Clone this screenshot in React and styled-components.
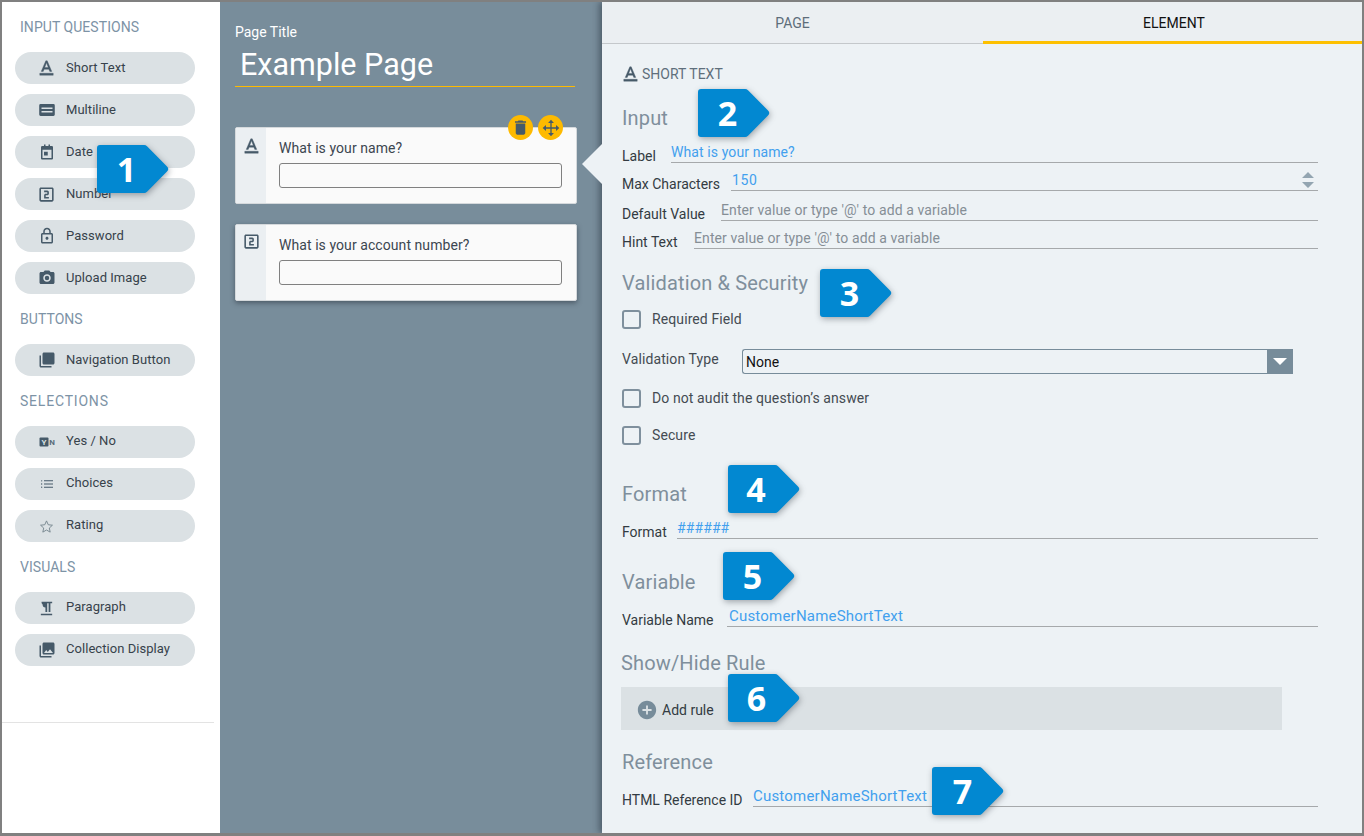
import styled, { createGlobalStyle } from 'styled-components';

const GlobalStyle = createGlobalStyle`
  html, body {
    margin: 0;
    padding: 0;
    background: #fff;
  }
  * {
    box-sizing: border-box;
  }
`;

const ICON_PATHS = {
  shortText: 'M5 17v2h14v-2H5zm4.5-4.2h5l.9 2.2h2.1L12.75 4h-1.5L6.5 15h2.1l.9-2.2zM12 5.98L13.87 11h-3.74L12 5.98z',
  multiline: 'M5 5.500h14a1.500 1.500 0 0 1 1.500 1.500v10a1.500 1.500 0 0 1-1.500 1.500H5A1.500 1.500 0 0 1 3.500 17V7A1.500 1.500 0 0 1 5 5.500zm1 3.700v1.700h12V9.200H6zm0 3.900v1.700h12v-1.700H6z',
  date: 'M8 2h2v2h4V2h2v2h2.500A1.500 1.500 0 0 1 20 5.500v15a1.500 1.500 0 0 1-1.500 1.500h-13A1.500 1.500 0 0 1 4 20.500v-15A1.500 1.500 0 0 1 5.500 4H8V2zM6 9v11h12V9H6zm2 2.500h5v5H8v-5z',
  number: 'M19 3H5c-1.100 0-2 .9-2 2v14c0 1.100.9 2 2 2h14c1.100 0 2-.9 2-2V5c0-1.100-.9-2-2-2zm0 16H5V5h14v14zm-4-4h-4v-2h2c1.100 0 2-.9 2-2V9c0-1.100-.9-2-2-2H9v2h4v2h-2c-1.100 0-2 .9-2 2v4h6v-2z',
  lock: 'M18 8h-1V6c0-2.760-2.240-5-5-5S7 3.240 7 6v2H6c-1.100 0-2 .9-2 2v10c0 1.100.9 2 2 2h12c1.100 0 2-.9 2-2V10c0-1.100-.9-2-2-2zM9 6c0-1.660 1.340-3 3-3s3 1.340 3 3v2H9V6zm9 14H6V10h12v10zm-6-3c1.100 0 2-.9 2-2s-.9-2-2-2-2 .9-2 2 .9 2 2 2z',
  camera: 'M9 2L7.170 4H4c-1.100 0-2 .9-2 2v12c0 1.100.9 2 2 2h16c1.100 0 2-.9 2-2V6c0-1.100-.9-2-2-2h-3.170L15 2H9zm3 15c-2.760 0-5-2.240-5-5s2.240-5 5-5 5 2.240 5 5-2.240 5-5 5zm0-2a3 3 0 1 0 0-6 3 3 0 0 0 0 6z',
  nav: 'M4 6H2v14c0 1.100.9 2 2 2h14v-2H4V6zm16-4H8c-1.100 0-2 .9-2 2v12c0 1.100.9 2 2 2h12c1.100 0 2-.9 2-2V4c0-1.100-.9-2-2-2z',
  list: 'M4 6.200a1 1 0 1 0 0 2 1 1 0 0 0 0-2zm0 4.800a1 1 0 1 0 0 2 1 1 0 0 0 0-2zm0 4.800a1 1 0 1 0 0 2 1 1 0 0 0 0-2zM7.500 6.400h13.500v1.500H7.500V6.400zm0 4.800h13.500v1.500H7.500v-1.500zm0 4.800h13.500v1.500H7.500V16z',
  paragraph: 'M5 2.500h15v2h-2.500V17h-2.500V4.500h-2V17h-2.500v-6.500A4 4 0 0 1 6.500 6.500 4 4 0 0 1 5 2.500zM4 19.500h16v2H4v-2z',
  collection: 'M22 16V4c0-1.100-.9-2-2-2H8c-1.100 0-2 .9-2 2v12c0 1.100.9 2 2 2h12c1.100 0 2-.9 2-2zm-11-4l2.030 2.710L16 11l4 5H8l3-4zM2 6v14c0 1.100.9 2 2 2h14v-2H4V6H2z',
  trash: 'M6 19c0 1.100.9 2 2 2h8c1.100 0 2-.9 2-2V7H6v12zM19 4h-3.500l-1-1h-5l-1 1H5v2h14V4z',
  add: 'M12 2C6.480 2 2 6.480 2 12s4.480 10 10 10 10-4.480 10-10S17.520 2 12 2zm5 11h-4v4h-2v-4H7v-2h4V7h2v4h4v2z',
  move: 'M12 2l3.500 4h-2.700v5.200H18V8.500l4 3.500-4 3.500v-2.700h-5.200V18h2.700L12 22l-3.500-4h2.700v-5.200H6v2.700L2 12l4-3.500v2.700h5.200V6H8.500L12 2z',
};

const Frame = styled.div`
  position: relative;
  display: flex;
  width: 1364px;
  height: 836px;
  overflow: hidden;
  border: solid #808080;
  border-width: 2px 2px 3px 2px;
  font-family: Roboto, "Liberation Sans", sans-serif;
`;

const Toolbox = styled.aside`
  flex: 0 0 218px;
  background: #fff;
  padding-left: 13px;
`;

const ToolHeading = styled.h3`
  margin: 0 0 0 5px;
  height: 50px;
  line-height: 50px;
  font-size: 14px;
  font-weight: 400;
  letter-spacing: ${(p) => p.$spacing || 0.05}px;
  color: #7d93a6;
`;

const ToolList = styled.div`
  display: flex;
  flex-direction: column;
  gap: 10px;
`;

const ToolPill = styled.div`
  display: flex;
  align-items: center;
  width: 180px;
  height: 32px;
  padding-left: 20px;
  padding-bottom: 1px;
  border-radius: 16px;
  background: #dbe1e4;
  font-size: 13px;
  letter-spacing: 0.05px;
  color: #37424b;
`;

const ToolIcon = styled.span`
  display: flex;
  flex: 0 0 23px;
  justify-content: center;
  align-items: center;
  margin-right: 8px;
  margin-top: 1px;
`;

const ToolText = styled.span`
  margin-top: ${(p) => (p.$lift ? -2 : 0)}px;
`;

const ToolDivider = styled.div`
  height: 1px;
  margin: 56px 0 0 -13px;
  width: 212px;
  background: #e3e3e3;
`;

const Canvas = styled.main`
  flex: 0 0 382px;
  background: #788d9b;
  padding: 21px 25px 0 15px;
`;

const PageLabel = styled.div`
  height: 18px;
  line-height: 18px;
  font-size: 14px;
  color: #fff;
`;

const PageName = styled.div`
  width: 340px;
  height: 43px;
  margin-top: 3px;
  padding-left: 5px;
  line-height: 41px;
  font-size: 30.5px;
  color: #fff;
  border-bottom: 1px solid #feba00;
`;

const QuestionCard = styled.div`
  position: relative;
  display: flex;
  height: 77px;
  margin-top: ${(p) => p.$top}px;
  border: 1px solid #d5d9dc;
  border-radius: 2px;
  background: #fafafa;
  box-shadow: ${(p) => (p.$raised ? '0 2px 5px rgba(40, 50, 60, 0.55)' : 'none')};
`;

const CardStrip = styled.div`
  flex: 0 0 30px;
  display: flex;
  justify-content: center;
  padding-top: 7px;
  background: #ebeff2;
`;

const CardBody = styled.div`
  flex: 1;
  padding: 11px 14px 0 13px;
`;

const CardQuestion = styled.div`
  height: 18px;
  line-height: 18px;
  font-size: 14px;
  letter-spacing: 0.07px;
  color: #3c4650;
`;

const CardInput = styled.div`
  height: 25px;
  margin-top: 6px;
  border: 1px solid #808080;
  border-radius: 3px;
  background: #fafafa;
`;

const CardActions = styled.div`
  position: absolute;
  top: -13px;
  right: 13px;
  display: flex;
  gap: 5px;
`;

const ActionButton = styled.span`
  display: flex;
  align-items: center;
  justify-content: center;
  width: 25px;
  height: 25px;
  border-radius: 50%;
  background: #feba00;
`;

const Inspector = styled.section`
  position: relative;
  flex: 1;
  background: #edf2f5;
  box-shadow: -3px 0 6px rgba(30, 40, 50, 0.45);
`;

const Pointer = styled.div`
  position: absolute;
  left: -20px;
  top: 142px;
  border-style: solid;
  border-width: 20px 20px 20px 0;
  border-color: transparent #edf2f5 transparent transparent;
`;

const Tabs = styled.div`
  display: flex;
  height: 42px;
  background: #ebeff2;
`;

const Tab = styled.div`
  flex: ${(p) => (p.$active ? '1' : '0 0 381px')};
  padding-left: ${(p) => (p.$active ? 3 : 0)}px;
  text-align: center;
  line-height: 43px;
  font-size: 14px;
  color: ${(p) => (p.$active ? '#111' : '#5d6d7a')};
  border-bottom: ${(p) => (p.$active ? '3px solid #fdc000' : '1px solid #c4c8cb')};
`;

const Form = styled.div`
  padding: 22px 44px 0 20px;
`;

const ElementType = styled.div`
  display: flex;
  align-items: center;
  height: 16px;
  font-size: 14px;
  color: #5f6f7c;

  svg {
    margin-right: 0;
    margin-left: -3px;
  }
`;

const SectionTitle = styled.h2`
  margin: ${(p) => p.$top}px 0 0 ${(p) => p.$left || 0}px;
  height: 24px;
  line-height: 24px;
  font-size: 20px;
  font-weight: 400;
  letter-spacing: 0.15px;
  color: #7f8f9c;
`;

const FieldRow = styled.div`
  display: flex;
  align-items: flex-end;
  height: 22px;
  margin-top: ${(p) => p.$top}px;
`;

const FieldLabel = styled.label`
  flex: 0 0 ${(p) => p.$width}px;
  line-height: 14px;
  font-size: 14px;
  color: #333b42;
`;

const FieldValue = styled.div`
  flex: 1;
  display: flex;
  justify-content: space-between;
  align-items: center;
  height: 22px;
  padding: 0 4px 0 ${(p) => p.$pad || 0}px;
  line-height: 18px;
  font-size: ${(p) => p.$size || 14}px;
  letter-spacing: ${(p) => p.$spacing || 0.1}px;
  color: ${(p) => (p.$placeholder ? '#858e95' : '#42a0ee')};
  border-bottom: 1px solid #a6a9ab;
`;

const CheckRow = styled.label`
  display: flex;
  align-items: center;
  height: 19px;
  margin-top: ${(p) => p.$top}px;
  font-size: 14px;
  letter-spacing: 0.1px;
  color: #444b52;
`;

const CheckBox = styled.span`
  flex: 0 0 19px;
  height: 19px;
  margin-right: 11px;
  border: 2px solid #7f909d;
  border-radius: 3px;
`;

const CheckText = styled.span`
  margin-top: -2px;
`;

const SelectRow = styled.div`
  display: flex;
  height: 25px;
  margin-top: 20px;
`;

const SelectLabel = styled.label`
  flex: 0 0 120px;
  line-height: 20px;
  font-size: 14px;
  letter-spacing: 0.1px;
  color: #444b52;
`;

const SelectBox = styled.div`
  flex: 0 0 551px;
  display: flex;
  justify-content: space-between;
  border: 1px solid #778c9a;
  border-right: 0;
  border-radius: 3px 0 0 3px;
  padding-left: 3px;
  line-height: 24px;
  font-size: 14px;
  color: #111;
`;

const SelectArrow = styled.span`
  display: flex;
  align-items: center;
  justify-content: center;
  width: 26px;
  margin: -1px 0;
  background: #778c9a;

  &::after {
    content: '';
    border-style: solid;
    border-width: 7px 7px 0 7px;
    border-color: #fff transparent transparent transparent;
  }
`;

const RuleBar = styled.div`
  display: flex;
  align-items: center;
  width: 661px;
  height: 43px;
  margin: 12px 0 0 -1px;
  padding: 2px 0 0 15px;
  background: #dbe1e4;
  font-size: 14px;
  color: #333b42;

  svg {
    margin-right: 4px;
  }
`;

const Badge = styled.div`
  position: absolute;
  left: ${(p) => p.$x}px;
  top: ${(p) => p.$y}px;
  width: 71px;
  height: 48px;
  z-index: 5;

  svg {
    position: absolute;
    inset: 0;
    overflow: visible;
    filter: drop-shadow(1px 2px 3px rgba(40, 50, 60, 0.4));
  }
`;

const BadgeNumber = styled.span`
  position: absolute;
  left: 0;
  top: 0;
  width: ${(p) => p.$width}px;
  text-align: center;
  line-height: 48px;
  font-family: "Open Sans", "Liberation Sans", sans-serif;
  font-size: 34px;
  font-weight: 700;
  color: #fff;
`;

function Icon({ name, size = 18, color = '#465a69', bold = 0 }) {
  return (
    <svg width={size} height={size} viewBox="0 0 24 24" fill={color} fillRule="evenodd" stroke={bold ? color : 'none'} strokeWidth={bold}>
      <path d={ICON_PATHS[name]} />
    </svg>
  );
}

function YesNoIcon() {
  return (
    <svg width="16" height="10" viewBox="0 0 16 10">
      <rect x="0.500" y="0.500" width="9" height="9" rx="1" fill="#465a69" />
      <text x="5" y="8" textAnchor="middle" fontFamily="Roboto, sans-serif" fontSize="8" fontWeight="700" fill="#dbe1e4">Y</text>
      <text x="13" y="8" textAnchor="middle" fontFamily="Roboto, sans-serif" fontSize="8" fontWeight="700" fill="#5a6d7b">N</text>
    </svg>
  );
}

function StarIcon() {
  return (
    <svg width="15" height="15" viewBox="0 0 24 24" fill="none" stroke="#76868f" strokeWidth="1.500">
      <path d="M12 3l2.800 6.200 6.700.7-5 4.500 1.400 6.600L12 17.600 6.100 21l1.400-6.600-5-4.500 6.700-.7L12 3z" />
    </svg>
  );
}

function BadgeMark({ n, x, y, numberWidth = 59 }) {
  return (
    <Badge $x={x} $y={y}>
      <svg width="71" height="48" viewBox="0 0 71 48">
        <path d="M3 0H47a4 4 0 0 1 3 1.300L70 21.500a3.500 3.500 0 0 1 0 5L50 46.700a4 4 0 0 1-3 1.300H3a3 3 0 0 1-3-3V3a3 3 0 0 1 3-3z" fill="#0288d1" />
      </svg>
      <BadgeNumber $width={numberWidth}>{n}</BadgeNumber>
    </Badge>
  );
}

function Tool({ icon, label, lift }) {
  return (
    <ToolPill>
      <ToolIcon>{icon}</ToolIcon>
      <ToolText $lift={lift}>{label}</ToolText>
    </ToolPill>
  );
}

export default function App() {
  return (
    <>
      <GlobalStyle />
      <Frame>
        <Toolbox>
          <ToolHeading>INPUT QUESTIONS</ToolHeading>
          <ToolList>
            <Tool icon={<Icon name="shortText" size={23} bold={0.4} />} label="Short Text" />
            <Tool icon={<Icon name="multiline" size={22} />} label="Multiline" />
            <Tool icon={<Icon name="date" size={18} />} label="Date" />
            <Tool icon={<Icon name="number" size={19} />} label="Number" />
            <Tool icon={<Icon name="lock" size={18} />} label="Password" />
            <Tool icon={<Icon name="camera" size={18} />} label="Upload Image" />
          </ToolList>
          <ToolHeading>BUTTONS</ToolHeading>
          <ToolList>
            <Tool icon={<Icon name="nav" size={18} />} label="Navigation Button" />
          </ToolList>
          <ToolHeading $spacing={0.8}>SELECTIONS</ToolHeading>
          <ToolList>
            <Tool icon={<YesNoIcon />} label="Yes / No" lift />
            <Tool icon={<Icon name="list" size={16} />} label="Choices" lift />
            <Tool icon={<StarIcon />} label="Rating" lift />
          </ToolList>
          <ToolHeading>VISUALS</ToolHeading>
          <ToolList>
            <Tool icon={<Icon name="paragraph" size={17} />} label="Paragraph" lift />
            <Tool icon={<Icon name="collection" size={18} />} label="Collection Display" lift />
          </ToolList>
          <ToolDivider />
        </Toolbox>

        <Canvas>
          <PageLabel>Page Title</PageLabel>
          <PageName>Example Page</PageName>
          <QuestionCard $top={40}>
            <CardStrip>
              <Icon name="shortText" size={23} bold={0.4} />
            </CardStrip>
            <CardBody>
              <CardQuestion>What is your name?</CardQuestion>
              <CardInput />
            </CardBody>
            <CardActions>
              <ActionButton>
                <Icon name="trash" size={19} />
              </ActionButton>
              <ActionButton>
                <Icon name="move" size={20} />
              </ActionButton>
            </CardActions>
          </QuestionCard>
          <QuestionCard $top={20} $raised>
            <CardStrip>
              <Icon name="number" size={19} />
            </CardStrip>
            <CardBody>
              <CardQuestion>What is your account number?</CardQuestion>
              <CardInput />
            </CardBody>
          </QuestionCard>
        </Canvas>

        <Inspector>
          <Pointer />
          <Tabs>
            <Tab>PAGE</Tab>
            <Tab $active>ELEMENT</Tab>
          </Tabs>
          <Form>
            <ElementType>
              <Icon name="shortText" size={23} bold={0.4} />
              SHORT TEXT
            </ElementType>

            <SectionTitle $top={24}>Input</SectionTitle>
            <FieldRow $top={11}>
              <FieldLabel $width={49}>Label</FieldLabel>
              <FieldValue>What is your name?</FieldValue>
            </FieldRow>
            <FieldRow $top={6}>
              <FieldLabel $width={109}>Max Characters</FieldLabel>
              <FieldValue $pad={1} $spacing={0.6}>
                150
                <svg width="12" height="16" viewBox="0 0 12 16">
                  <path d="M6 0l6 6H0zM0 10h12l-6 6z" fill="#93a5b1" />
                </svg>
              </FieldValue>
            </FieldRow>
            <FieldRow $top={8}>
              <FieldLabel $width={99}>Default Value</FieldLabel>
              <FieldValue $placeholder>Enter value or type '@' to add a variable</FieldValue>
            </FieldRow>
            <FieldRow $top={6}>
              <FieldLabel $width={72}>Hint Text</FieldLabel>
              <FieldValue $placeholder>Enter value or type '@' to add a variable</FieldValue>
            </FieldRow>

            <SectionTitle $top={22}>Validation &amp; Security</SectionTitle>
            <CheckRow $top={15}>
              <CheckBox />
              <CheckText>Required Field</CheckText>
            </CheckRow>
            <SelectRow>
              <SelectLabel>Validation Type</SelectLabel>
              <SelectBox>
                None
                <SelectArrow />
              </SelectBox>
            </SelectRow>
            <CheckRow $top={15}>
              <CheckBox />
              <CheckText>Do not audit the question’s answer</CheckText>
            </CheckRow>
            <CheckRow $top={18}>
              <CheckBox />
              <CheckText>Secure</CheckText>
            </CheckRow>

            <SectionTitle $top={37}>Format</SectionTitle>
            <FieldRow $top={11}>
              <FieldLabel $width={55}>Format</FieldLabel>
              <FieldValue>######</FieldValue>
            </FieldRow>

            <SectionTitle $top={31}>Variable</SectionTitle>
            <FieldRow $top={11}>
              <FieldLabel $width={105}>Variable Name</FieldLabel>
              <FieldValue $pad={2} $size={15} $spacing={0.2}>CustomerNameShortText</FieldValue>
            </FieldRow>

            <SectionTitle $top={24} $left={-1}>Show/Hide Rule</SectionTitle>
            <RuleBar>
              <Icon name="add" size={22} color="#778c9a" />
              Add rule
            </RuleBar>

            <SectionTitle $top={20}>Reference</SectionTitle>
            <FieldRow $top={11}>
              <FieldLabel $width={131}>HTML Reference ID</FieldLabel>
              <FieldValue $size={15} $spacing={0.2}>CustomerNameShortText</FieldValue>
            </FieldRow>
          </Form>
        </Inspector>

        <BadgeMark n={1} x={95} y={143} />
        <BadgeMark n={2} x={696} y={87} />
        <BadgeMark n={3} x={818} y={267} />
        <BadgeMark n={4} x={726} y={463} numberWidth={56} />
        <BadgeMark n={5} x={721} y={550} />
        <BadgeMark n={6} x={726} y={672} numberWidth={57} />
        <BadgeMark n={7} x={930} y={765} numberWidth={61} />
      </Frame>
    </>
  );
}
